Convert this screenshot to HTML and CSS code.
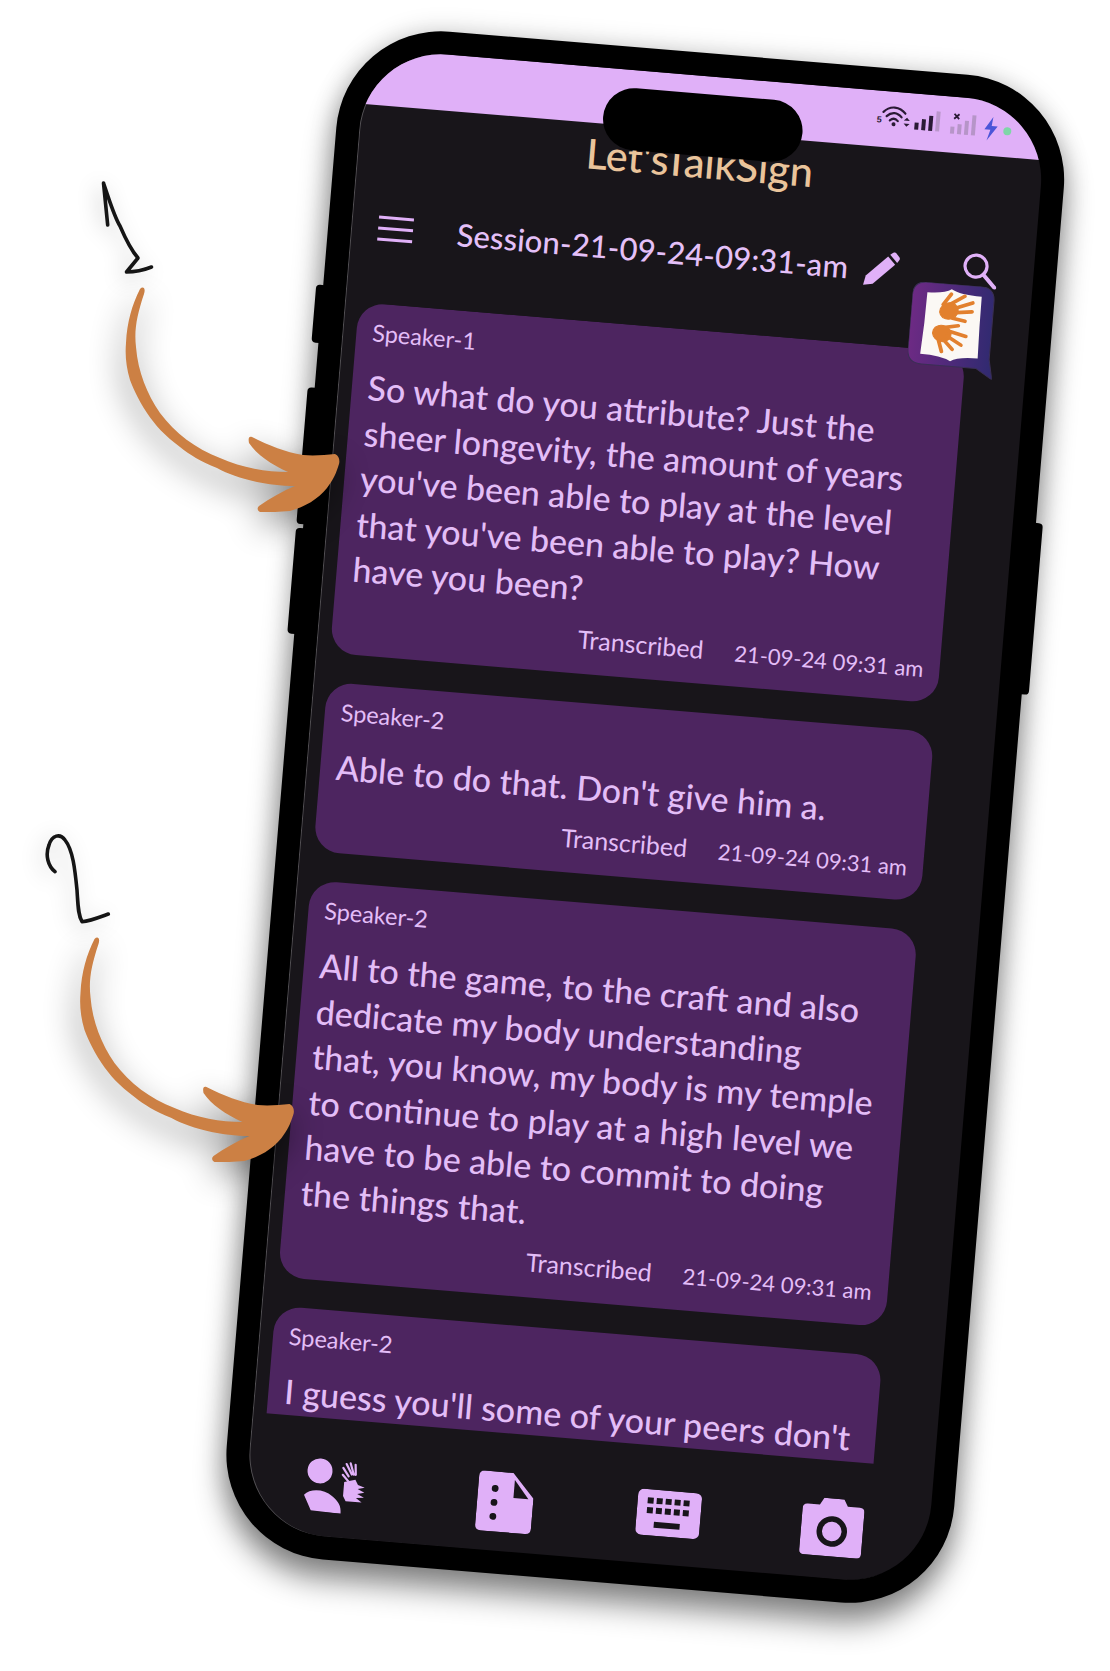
FILE: index.html
```html
<!DOCTYPE html>
<html lang="en">
<head>
  <meta charset="UTF-8" />
  <meta name="viewport" content="width=device-width, initial-scale=1.0" />
  <title>LetsTalkSign</title>
  <link rel="stylesheet" href="styles.css">
</head>
<body>
  <div class="canvas">
    <div class="phone">
      <span class="side-btn btn-a"></span>
      <span class="side-btn btn-b"></span>
      <span class="side-btn btn-c"></span>
      <span class="side-btn btn-d"></span>

      <div class="screen">
        <div class="status-band">
          <svg class="status-icons" width="142" height="30" viewBox="0 0 142 30">
            <g fill="none" stroke="#2a1a35" stroke-width="2.2" stroke-linecap="round">
              <path d="M7 9 C13 2 23 2 29 9" />
              <path d="M10.5 13 C15 8 21 8 25.5 13" />
              <path d="M14 17 C16.5 14.5 19.5 14.5 22 17" />
            </g>
            <circle cx="18" cy="20.5" r="2" fill="#2a1a35" />
            <text class="wifi-five" x="1" y="20">5</text>
            <path d="M28 16 l3 -3 l3 3 z M28 19 l3 3 l3 -3 z" fill="#2a1a35" />
            <g fill="#2a1a35">
              <rect x="39" y="17" width="4" height="7" />
              <rect x="46" y="13" width="4" height="11" />
              <rect x="53" y="9" width="4" height="15" />
            </g>
            <rect x="60" y="4" width="4" height="20" fill="#a98cb8" opacity="0.7" />
            <path d="M78 5 l5 5 M83 5 l-5 5" stroke="#2a1a35" stroke-width="1.8" />
            <g fill="#a98cb8" opacity="0.75">
              <rect x="75" y="18" width="4" height="7" />
              <rect x="82" y="15" width="4" height="10" />
              <rect x="89" y="11" width="4" height="14" />
              <rect x="96" y="5" width="4" height="20" />
            </g>
            <path d="M117 5 L109 18 L115 18 L112 29 L122 14 L116 14 Z" fill="#4b55d8" />
            <circle cx="132" cy="18" r="4" fill="#7fd6a8" />
          </svg>
        </div>

        <div class="app-title">Let'sTalkSign</div>

        <div class="session-row">
          <span class="menu-icon"><i></i><i></i><i></i></span>
          <span class="session-name">Session-21-09-24-09:31-am</span>
          <svg class="pencil-icon" width="36" height="36" viewBox="0 0 38 38">
            <path d="M1 37 L3 27 L25 5 L33 13 L11 35 Z" fill="#e0b0f8" />
            <path d="M27 3 L30 0.5 Q31.5 -0.5 33 0.5 L37 5 Q38 6.5 37 8 L35 11 Z" fill="#e0b0f8" />
          </svg>
          <svg class="search-icon" width="36" height="36" viewBox="0 0 36 36">
            <circle cx="14" cy="14" r="11" fill="none" stroke="#e0b0f8" stroke-width="3.2" />
            <path d="M22 22 L34 34" stroke="#e0b0f8" stroke-width="4" stroke-linecap="round" />
          </svg>
        </div>

        <div class="msg-list">
          <div class="msg-card">
            <div class="speaker">Speaker-1</div>
            <div class="msg-text">So what do you attribute? Just the<br>sheer longevity, the amount of years<br>you've been able to play at the level<br>that you've been able to play? How<br>have you been?</div>
            <div class="msg-meta"><span class="msg-state">Transcribed</span><span>21-09-24 09:31 am</span></div>
          </div>
          <div class="msg-card">
            <div class="speaker">Speaker-2</div>
            <div class="msg-text">Able to do that. Don't give him a.</div>
            <div class="msg-meta"><span class="msg-state">Transcribed</span><span>21-09-24 09:31 am</span></div>
          </div>
          <div class="msg-card">
            <div class="speaker">Speaker-2</div>
            <div class="msg-text">All to the game, to the craft and also<br>dedicate my body understanding<br>that, you know, my body is my temple<br>to continue to play at a high level we<br>have to be able to commit to doing<br>the things that.</div>
            <div class="msg-meta"><span class="msg-state">Transcribed</span><span>21-09-24 09:31 am</span></div>
          </div>
          <div class="msg-card msg-card-last">
            <div class="speaker">Speaker-2</div>
            <div class="msg-text">I guess you'll some of your peers don't</div>
          </div>
        </div>

        <div class="bottom-nav">
          <svg width="60" height="54" viewBox="0 0 60 54" fill="#e0b0f8">
            <circle cx="14" cy="13" r="12.5" />
            <path d="M0 38 C6 31 20 31 28 37 C35 42 38 46 38 54 L8 53 Z" />
            <path d="M37 8 l6 8 M40 4 l6 10 M44 3 l4 11 M49 4 l1 10 M37 15 l7 7" stroke="#e0b0f8" stroke-width="2.2" stroke-linecap="round" />
            <path d="M39 22 L50 19 L53 24 L60 26 L53 28 L60 31 L53 33 L60 36 L52 37 L58 41 L42 41 L39 36 Z" />
          </svg>
          <svg class="nav-doc" width="56" height="60" viewBox="0 0 56 60">
            <path d="M6 0 H34 L56 24 V54 Q56 60 50 60 H6 Q0 60 0 54 V6 Q0 0 6 0 Z" fill="#e0b0f8" />
            <path d="M36 7 L51 25 H36 Z" fill="#18151a" />
            <g fill="#18151a">
              <circle cx="17" cy="17" r="3.4" />
              <circle cx="17" cy="31" r="3.4" />
              <circle cx="17" cy="45" r="3.4" />
            </g>
          </svg>
          <svg class="nav-keys" width="64" height="46" viewBox="0 0 64 46">
            <rect x="0" y="0" width="64" height="46" rx="6" fill="#e0b0f8" />
            <g fill="#18151a">
              <rect x="10" y="8" width="6" height="6" />
              <rect x="19" y="8" width="6" height="6" />
              <rect x="28" y="8" width="6" height="6" />
              <rect x="37" y="8" width="6" height="6" />
              <rect x="46" y="8" width="6" height="6" />
              <rect x="10" y="18" width="6" height="6" />
              <rect x="19" y="18" width="6" height="6" />
              <rect x="28" y="18" width="6" height="6" />
              <rect x="37" y="18" width="6" height="6" />
              <rect x="46" y="18" width="6" height="6" />
              <rect x="18" y="32" width="26" height="6" />
            </g>
          </svg>
          <svg class="nav-camera" width="62" height="58" viewBox="0 0 62 58">
            <path d="M5 7 H17 L21 0 H41 L45 7 H57 Q62 7 62 12 V53 Q62 58 57 58 H5 Q0 58 0 53 V12 Q0 7 5 7 Z" fill="#e0b0f8" />
            <circle cx="31" cy="33" r="12.5" fill="none" stroke="#18151a" stroke-width="5.5" />
          </svg>
        </div>
      </div>

      <div class="notch"></div>

      <svg class="app-badge" width="86" height="92" viewBox="0 0 82 92" preserveAspectRatio="none">
        <defs>
          <linearGradient id="badgeFill" x1="0" y1="0" x2="1" y2="0">
            <stop offset="0" stop-color="#6d2a84" />
            <stop offset="1" stop-color="#2f2a70" />
          </linearGradient>
        </defs>
        <path d="M14 0 H64 Q78 0 78 14 V72 L82 92 L66 82 H14 Q0 82 0 68 V14 Q0 0 14 0 Z" fill="url(#badgeFill)" stroke="#3a2f55" />
        <path d="M14 10 Q30 10 37 5 Q45 10 66 10 Q66 40 67 72 Q48 72 41 77 Q32 72 12 72 Q14 40 14 10 Z" fill="#fbf8f4" />
        <g fill="#e2802e" stroke="#e2802e" stroke-linecap="round">
          <ellipse cx="36" cy="27" rx="9" ry="8" transform="rotate(-30 36 27)" />
          <path d="M30 21 L37 10 M37 20 L50 11 M41 24 L58 17 M43 28 L58 26 M40 34 L52 36" stroke-width="3.6" />
          <ellipse cx="31" cy="50" rx="9" ry="8" transform="rotate(20 31 50)" />
          <path d="M32 44 L46 41 M37 47 L54 51 M36 52 L50 60 M33 56 L42 65 M28 56 L32 68" stroke-width="3.6" />
        </g>
      </svg>
    </div>

    <svg class="notes" width="1110" height="1671" viewBox="0 0 1110 1671">
      <defs>
        <path id="swoop" d="M140 289 C143 286 146 288 144 294 C137 315 134 330 136 347 C138 372 147 394 160 413 C175 433 196 449 220 458 C243 468 266 472 288 472 C272 465 256 454 249 443 C248 438 249 436 252 437 C270 446 285 452 303 455 C314 456 325 455 335 454 C339 456 340 460 339 464 C336 474 333 480 327 488 C318 499 305 507 290 511 C280 512 270 512 260 512 C257 510 257 508 259 506 C270 498 283 491 295 486 C280 486 268 484 257 482 C240 478 228 474 217 468 C200 461 190 455 180 447 C165 436 155 425 147 413 C137 398 132 385 130 380 C126 366 125 355 126 343 C127 322 132 305 140 289 Z" />
      </defs>
      <g class="swoop-ink">
        <use href="#swoop" />
        <use href="#swoop" x="-45.5" y="650" />
      </g>
      <g class="pen-ink">
        <path d="M107.7 225 L103.5 183 C110 202 114 216 120 226 C126 240 131 250 138 258 L126.5 272 C136 272 144 270 151.5 267" />
        <path d="M55 871.7 C48 866 45 855 49 845 C52 835 60 833 65 840 C73 850 75 870 77 890 C78 905 78 915 82 921.7 C90 921 100 917 108.3 914" />
      </g>
    </svg>
  </div>
</body>
</html>
```

FILE: styles.css
```css
body {
  margin: 0;
  background: #fff;
  font-family: 'Lato', 'Noto Sans', sans-serif;
}

.canvas {
  position: relative;
  width: 1110px;
  height: 1671px;
  overflow: hidden;
  background: #fff;
}

.phone {
  position: absolute;
  left: 345px;
  top: 23.4px;
  width: 730px;
  height: 1533px;
  box-sizing: border-box;
  padding: 23px;
  background: #000;
  border-radius: 105px;
  transform-origin: 0 0;
  transform: rotate(4.75deg);
  box-shadow: 0 20px 30px rgba(0, 0, 0, 0.45), 0 0 26px rgba(0, 0, 0, 0.18);
}

.side-btn {
  position: absolute;
  width: 12px;
  background: #000;
  border-radius: 4px;
}

.btn-a { left: -7px; top: 263px; height: 58px; }
.btn-b { left: -7px; top: 366px; height: 137px; }
.btn-c { left: -7px; top: 507px; height: 106px; }
.btn-d { right: -7px; top: 441px; height: 172px; }

.screen {
  display: flex;
  flex-direction: column;
  height: 100%;
  overflow: hidden;
  background: #18151a;
  border-radius: 82px;
  box-shadow: inset 1px 0 0 rgba(255, 255, 255, 0.25);
}

.status-band {
  display: flex;
  justify-content: flex-end;
  align-items: center;
  flex: none;
  height: 56px;
  padding-right: 28px;
  background: #e0b0f8;
}

.status-icons {
  margin-top: -2px;
}

.wifi-five {
  font-family: 'Liberation Sans', sans-serif;
  font-size: 9px;
  font-weight: bold;
  fill: #2a1a35;
}

.notch {
  position: absolute;
  left: 265px;
  top: 41px;
  width: 200px;
  height: 62px;
  background: #000;
  border-radius: 31px;
}

.app-title {
  flex: none;
  margin-top: 6px;
  text-align: center;
  color: #eac49b;
  font-size: 41.5px;
  font-weight: 500;
  line-height: 48px;
}

.session-row {
  display: flex;
  align-items: center;
  flex: none;
  height: 70px;
  margin-top: 33px;
  margin-bottom: 41px;
  padding: 0 36px 0 27px;
  color: #e4c0f8;
}

.menu-icon {
  display: flex;
  flex-direction: column;
  justify-content: space-between;
  width: 35px;
  height: 25px;
  margin-right: 44px;
}

.menu-icon i {
  display: block;
  height: 3px;
  background: #e0b0f8;
}

.session-name {
  font-size: 31px;
  font-weight: 500;
  letter-spacing: 0.15px;
  white-space: nowrap;
}

.pencil-icon {
  margin-left: 15px;
}

.search-icon {
  margin-left: auto;
  margin-bottom: 15px;
}

.msg-list {
  display: flex;
  flex-direction: column;
  gap: 29px;
  flex: 1;
  min-height: 0;
  overflow: hidden;
  padding: 0 61px 0 14px;
}

.msg-card {
  flex: none;
  padding: 15px 16px 19.5px;
  background: #4d2560;
  border-radius: 26px;
  color: #e3bdf7;
}

.msg-card-last {
  padding-bottom: 60px;
}

.speaker {
  font-size: 23.5px;
  line-height: 28px;
}

.msg-text {
  margin-top: 18px;
  font-size: 34px;
  font-weight: 500;
  line-height: 45.5px;
  white-space: nowrap;
}

.msg-meta {
  display: flex;
  justify-content: flex-end;
  align-items: baseline;
  gap: 31px;
  margin-top: 14px;
  font-size: 22px;
  line-height: 28px;
}

.msg-state {
  font-size: 25px;
}

.bottom-nav {
  display: grid;
  grid-template-columns: repeat(4, 166px);
  justify-items: center;
  align-items: center;
  flex: none;
  height: 118px;
  padding: 16px 0 0 5px;
  box-sizing: border-box;
}

.nav-doc {
  margin: 4px 0 0 10px;
}

.nav-keys {
  margin-left: 6px;
}

.nav-camera {
  margin-left: 2px;
}

.app-badge {
  position: absolute;
  left: 588px;
  top: 210px;
}

.notes {
  position: absolute;
  left: 0;
  top: 0;
  pointer-events: none;
}

.swoop-ink {
  fill: #cc8044;
  filter: drop-shadow(-2px 12px 16px rgba(0, 0, 0, 0.45));
}

.pen-ink {
  fill: none;
  stroke: #151515;
  stroke-width: 3.6;
  stroke-linecap: round;
  stroke-linejoin: round;
  filter: drop-shadow(-4px 4px 10px rgba(0, 0, 0, 0.22));
}
```
